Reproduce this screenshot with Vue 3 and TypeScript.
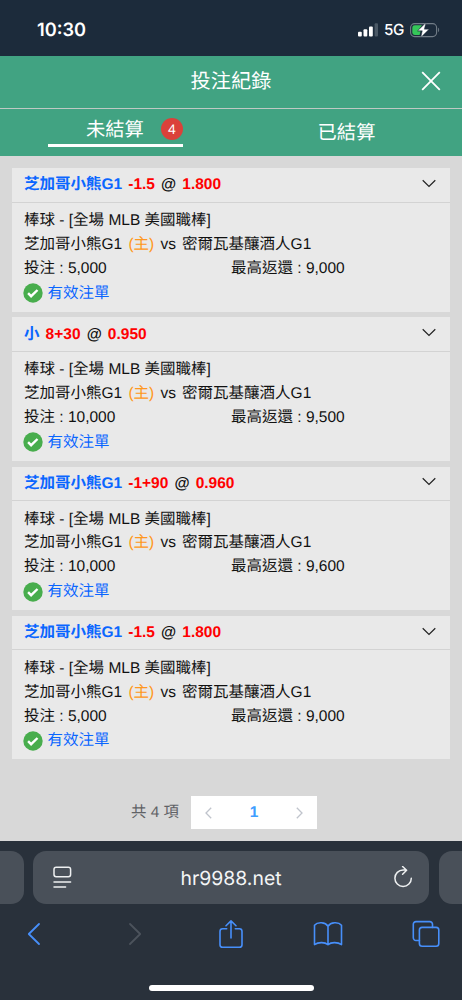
<script setup lang="ts">
interface Bet {
  pick: string
  line: string
  odds: string
  stake: string
  payout: string
}

const bets: Bet[] = [
  { pick: '芝加哥小熊G1', line: '-1.5', odds: '1.800', stake: '5,000', payout: '9,000' },
  { pick: '小', line: '8+30', odds: '0.950', stake: '10,000', payout: '9,500' },
  { pick: '芝加哥小熊G1', line: '-1+90', odds: '0.960', stake: '10,000', payout: '9,600' },
  { pick: '芝加哥小熊G1', line: '-1.5', odds: '1.800', stake: '5,000', payout: '9,000' },
]
</script>

<template>
  <div class="phone">
    <div class="status">
      <span class="clock">10:30</span>
      <div class="signals">
        <svg class="bars" width="20" height="14" viewBox="0 0 20 14">
          <rect x="0" y="8.7" width="3.8" height="4.8" rx="1" fill="#fff" />
          <rect x="5.5" y="6.3" width="3.8" height="7.2" rx="1" fill="#fff" />
          <rect x="11" y="3.4" width="3.8" height="10.1" rx="1" fill="#fff" />
          <rect x="16.6" y="0.3" width="3.4" height="13.2" rx="1" fill="#4b5966" />
        </svg>
        <span class="network">5G</span>
        <svg class="battery" width="30" height="16" viewBox="0 0 30 16">
          <rect x="0.6" y="1.6" width="26" height="13" rx="4" fill="none" stroke="#727d87" stroke-width="1.1" />
          <path d="M28.1 5.8c1.4.4 1.4 3.9 0 4.4z" fill="#727d87" />
          <path d="M4.7 3.3H12L7.3 9.2h3.2L9.6 13H4.7a2.4 2.4 0 0 1-2.4-2.4V5.7a2.4 2.4 0 0 1 2.4-2.4z" fill="#35c759" />
          <path d="M15.9.8 7.7 8.8h4.6l-1.4 6.5 8.1-8.1h-4.7z" fill="#fff" stroke="#1c2b3b" stroke-width=".4" />
        </svg>
      </div>
    </div>

    <header class="header">
      <h1>投注紀錄</h1>
      <svg class="close" width="20" height="20" viewBox="0 0 20 20">
        <path d="M1.2 1.2 18.8 18.8M18.8 1.2 1.2 18.8" stroke="#fff" stroke-width="1.8" />
      </svg>
    </header>

    <nav class="tabs">
      <div class="tab">
        <div class="tab-active">
          <span>未結算</span>
          <span class="count">4</span>
        </div>
      </div>
      <div class="tab tab-idle">已結算</div>
    </nav>

    <main class="content">
      <article v-for="(bet, i) in bets" :key="i" class="card">
        <div class="card-head">
          <span class="pick">{{ bet.pick }}</span>
          <span class="value">{{ bet.line }}</span>
          <span>@</span>
          <span class="value">{{ bet.odds }}</span>
          <svg class="chevron" width="14" height="9" viewBox="0 0 14 9">
            <path d="M.7 1.2 7 7.4l6.3-6.2" fill="none" stroke="#222" stroke-width="1.2" />
          </svg>
        </div>
        <div class="card-body">
          <div class="row">棒球 - [全場 MLB 美國職棒]</div>
          <div class="row match">
            <span>芝加哥小熊G1</span>
            <span class="home">(主)</span>
            <span>vs</span>
            <span>密爾瓦基釀酒人G1</span>
          </div>
          <div class="row amounts">
            <span>投注 : {{ bet.stake }}</span>
            <span>最高返還 : {{ bet.payout }}</span>
          </div>
          <div class="row valid">
            <svg width="20" height="20" viewBox="0 0 20 20">
              <circle cx="10" cy="10" r="9.7" fill="#48ad4d" />
              <path d="m5.1 10.1 3 3.1 6.4-6.2" fill="none" stroke="#fff" stroke-width="2.4" />
            </svg>
            <span>有效注單</span>
          </div>
        </div>
      </article>

      <div class="pager">
        <span class="total">共 4 項</span>
        <div class="pages">
          <svg width="7" height="12" viewBox="0 0 7 12"><path d="M6.2.8 1 6l5.2 5.2" /></svg>
          <strong>1</strong>
          <svg width="7" height="12" viewBox="0 0 7 12"><path d="M.8.8 6 6 .8 11.2" /></svg>
        </div>
      </div>
    </main>

    <footer class="browser">
      <div class="address-row">
        <div class="side side-left"></div>
        <div class="address">
          <svg width="19" height="23" viewBox="0 0 19 23" fill="none" stroke="#eef0f1" stroke-width="1.5" stroke-linecap="round">
            <rect x="1" y="1.2" width="16.6" height="9.6" rx="2.2" />
            <path d="M1 15.9h16.6M1 20.9h11.6" />
          </svg>
          <span>hr9988.net</span>
          <svg width="20" height="23" viewBox="0 0 20 23" fill="none" stroke="#eef0f1" stroke-width="1.5" stroke-linecap="round" stroke-linejoin="round">
            <path d="M18.3 12.2a8.2 8.2 0 1 1-8.2-8.2h3.1M9.6.5l4 3.7-4 4" />
          </svg>
        </div>
        <div class="side side-right"></div>
      </div>
      <div class="tools">
        <div class="tool">
          <svg width="14" height="24" viewBox="0 0 14 24"><path d="M12 2 1.8 12 12 22" stroke-width="1.8" /></svg>
        </div>
        <div class="tool forward">
          <svg class="disabled" width="14" height="24" viewBox="0 0 14 24"><path d="M2 2l10.2 10L2 22" stroke-width="1.8" /></svg>
        </div>
        <div class="tool share">
          <svg width="26" height="30" viewBox="0 0 26 30">
            <path d="M8.7 9.8H4.6a2.6 2.6 0 0 0-2.6 2.6v13.3a2.6 2.6 0 0 0 2.6 2.6h16.8a2.6 2.6 0 0 0 2.6-2.6V12.4a2.6 2.6 0 0 0-2.6-2.6h-4.1M13 19V2M8 6.8 13 1.9l5 4.9" />
          </svg>
        </div>
        <div class="tool">
          <svg width="30" height="26" viewBox="0 0 30 26">
            <path d="M15 5.2C12.4 1.1 4.6.6 1.5 4.2v19.4c3.7-2.5 10.1-2.8 13.5 0 3.4-2.8 9.8-2.5 13.5 0V4.2C25.4.6 17.6 1.1 15 5.2zM15 5.2v18.4" />
          </svg>
        </div>
        <div class="tool">
          <svg width="28" height="28" viewBox="0 0 28 28">
            <rect x="7.4" y="7.4" width="19.4" height="18.9" rx="2.7" />
            <path d="M7.4 20.5H4A2.7 2.7 0 0 1 1.3 17.8V4.3a2.7 2.7 0 0 1 2.7-2.7h13.8a2.7 2.7 0 0 1 2.7 2.7v3.1" />
          </svg>
        </div>
      </div>
      <div class="home-bar"></div>
    </footer>
  </div>
</template>

<style>
body {
  margin: 0;
}
</style>

<style scoped>
.phone {
  width: 462px;
  height: 1000px;
  display: flex;
  flex-direction: column;
  overflow: hidden;
  background: #d8d8d8;
  color: #111;
  font-family: "Liberation Sans", "Noto Sans CJK TC", sans-serif;
  font-size: 15.5px;
  text-rendering: geometricPrecision;
}
.status {
  flex: none;
  box-sizing: border-box;
  height: 55.5px;
  padding: 4px 22px 0 37px;
  background: #1c2b3b;
  display: flex;
  align-items: center;
  justify-content: space-between;
  color: #fff;
  font-family: Inter, sans-serif;
}
.clock {
  font-size: 18.2px;
  font-weight: 600;
}
.signals {
  display: flex;
  align-items: center;
}
.network {
  width: 20px;
  margin: 0 6px 0 6px;
  font-size: 15.2px;
  font-weight: 500;
  letter-spacing: -0.4px;
}
.header {
  flex: none;
  box-sizing: border-box;
  height: 53.5px;
  border-bottom: 1px solid #bec9c4;
  background: #41a382;
  display: grid;
  grid-template-columns: 1fr auto 1fr;
  align-items: center;
  color: #fff;
}
h1 {
  grid-column: 2;
  margin: 0;
  padding-top: 1px;
  font-size: 20.2px;
  font-weight: 400;
  line-height: 51.5px;
}
.close {
  justify-self: end;
  margin: 0 21px 2px 0;
}
.tabs {
  flex: none;
  height: 47px;
  background: #41a382;
  display: grid;
  grid-template-columns: 1fr 1fr;
  color: #fff;
  font-size: 19.3px;
}
.tab {
  display: flex;
  justify-content: center;
}
.tab-active {
  box-sizing: border-box;
  width: 135px;
  height: 38px;
  padding: 6px 0 0 38px;
  border-bottom: 3.5px solid #fff;
  display: flex;
  align-items: center;
  justify-content: space-between;
  line-height: 28px;
}
.tab-active > span:first-child {
  padding-top: 2px;
}
.count {
  width: 22px;
  height: 22px;
  margin-bottom: 1px;
  border-radius: 50%;
  background: #db413a;
  font-size: 14px;
  line-height: 22px;
  text-align: center;
}
.tab-idle {
  line-height: 49px;
}
.content {
  flex: 1;
  padding: 12px 12px 0;
}
.card {
  height: 143.6px;
  margin-bottom: 5.7px;
  background: #e9e9e9;
}
.card-head {
  box-sizing: border-box;
  height: 34.5px;
  padding: 0 14px 0 12px;
  border-bottom: 1.5px solid #d3d3d3;
  display: flex;
  align-items: center;
  gap: 6.1px;
  font-weight: 700;
  line-height: 33px;
}
.pick {
  color: #0a66ff;
}
.value {
  color: #f00;
}
.chevron {
  margin: 0 0 3px auto;
}
.card-body {
  padding: 6.6px 12px 0;
}
.row {
  height: 23.8px;
  line-height: 23.8px;
  white-space: nowrap;
}
.match {
  display: flex;
  gap: 6.2px;
}
.home {
  color: #ff9720;
}
.amounts {
  display: grid;
  grid-template-columns: 207px 1fr;
}
.valid {
  height: 26px;
  display: flex;
  align-items: center;
  gap: 4.5px;
  color: #0a66ff;
}
.valid svg {
  margin: 0 0 1px -1px;
}
.pager {
  margin: 37px 0 0 119px;
  display: flex;
  align-items: center;
  gap: 12px;
  color: #606266;
}
.total {
  width: 48px;
  font-size: 15.4px;
  line-height: 33px;
  white-space: nowrap;
}
.pages {
  box-sizing: border-box;
  width: 126px;
  height: 33px;
  padding: 0 14px;
  background: #fff;
  display: flex;
  align-items: center;
  justify-content: space-between;
  color: #409eff;
}
.pages path {
  fill: none;
  stroke: #c0c4cc;
  stroke-width: 1.3;
}
.browser {
  flex: none;
  box-sizing: border-box;
  height: 159px;
  padding-top: 10px;
  background: #29313b;
  display: flex;
  flex-direction: column;
}
.address-row {
  height: 53px;
  display: flex;
  justify-content: space-between;
}
.side,
.address {
  background: #495059;
}
.side-left {
  width: 23.5px;
  border-radius: 0 13px 13px 0;
}
.side-right {
  width: 23.5px;
  border-radius: 13px 0 0 13px;
}
.address {
  box-sizing: border-box;
  width: 396px;
  padding: 0 16px 0 20px;
  border-radius: 13px;
  display: flex;
  align-items: center;
  justify-content: space-between;
  color: #f4f5f6;
  font-family: Inter, sans-serif;
  font-size: 19.4px;
}
.address span {
  margin-right: 3px;
}
.tools {
  height: 60px;
  padding: 0 11px 0 9px;
  display: flex;
  align-items: center;
  justify-content: space-between;
}
.tool {
  box-sizing: border-box;
  width: 50px;
  display: flex;
  justify-content: center;
}
.forward {
  padding-left: 6px;
}
.share {
  padding-left: 2px;
}
.tools svg {
  fill: none;
  stroke: #478ffa;
  stroke-width: 1.6;
  stroke-linecap: round;
  stroke-linejoin: round;
}
.tools .disabled {
  stroke: #4c535c;
}
.home-bar {
  width: 165px;
  height: 6px;
  margin: 21px auto 0;
  border-radius: 3px;
  background: #fff;
}
</style>
